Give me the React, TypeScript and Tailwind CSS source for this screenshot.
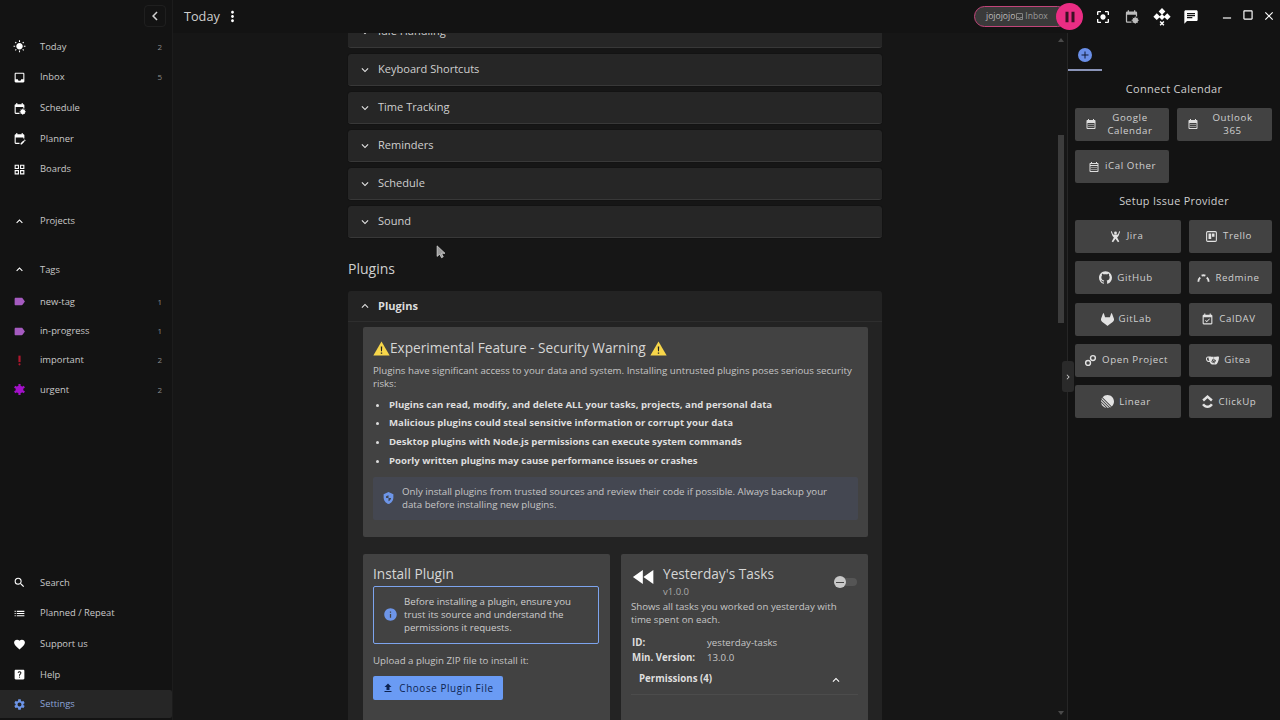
import React from 'react';
import {
  MdWbSunny, MdInbox, MdEditCalendar, MdOutlineGridView, MdExpandLess, MdExpandMore, MdLabel, MdPriorityHigh,
  MdSearch, MdList, MdFavorite, MdHelpCenter, MdSettings, MdChevronLeft, MdChevronRight, MdMoreVert, MdPause,
  MdCenterFocusStrong, MdChat, MdClose, MdAdd, MdCalendarMonth, MdFileUpload, MdInfo, MdFastRewind, MdRemove,
  MdEventAvailable, MdOutlineCalendarMonth, MdOutlineInbox, MdCropSquare,
} from 'react-icons/md';
import { SiGithub, SiGitlab, SiGitea, SiLinear, SiClickup } from 'react-icons/si';

const ScheduleIcon = ({ className = '' }: { className?: string }) => (
  <svg viewBox="0 0 24 24" className={className} fill="currentColor">
    <path d="M19 4h-1V2h-2v2H8V2H6v2H5a2 2 0 0 0-2 2v14a2 2 0 0 0 2 2h7v-2H5V9h14v3h2V6a2 2 0 0 0-2-2z" />
    <circle cx="18" cy="18" r="4.5" />
    <path d="M18 12v12M12 18h12M14 14l8 8M22 14l-8 8" stroke="currentColor" strokeWidth="1.2" />
  </svg>
);

const SparkIcon = ({ className = '' }: { className?: string }) => (
  <svg viewBox="0 0 24 24" className={className} fill="currentColor">
    <path d="M12 0l4.500 4.500L12 9 7.500 4.500zM5 7l4.500 4.500L5 16 .5 11.500zM19 7l4.500 4.500L19 16l-4.500-4.500zM12 8l4 4-4 4-4-4z" />
    <path d="M9.500 18l5 5M14.500 18l-5 5" stroke="currentColor" strokeWidth="2" />
  </svg>
);

const JiraIcon = ({ className = '' }: { className?: string }) => (
  <svg viewBox="0 0 24 24" className={className} fill="currentColor">
    <circle cx="12" cy="5.5" r="2.6" />
    <path d="M5 2l2.5 6.5h9L19 2l1.5 1-3 8-2.5 3 4 7-2.5 1.5L12 16l-4.500 6.500L5 21l4-7-2.500-3-3-8z" />
  </svg>
);

const TrelloIcon = ({ className = '' }: { className?: string }) => (
  <svg viewBox="0 0 24 24" className={className} fill="currentColor">
    <path fillRule="evenodd" d="M5 2h14a3 3 0 0 1 3 3v14a3 3 0 0 1-3 3H5a3 3 0 0 1-3-3V5a3 3 0 0 1 3-3zm0 2a1 1 0 0 0-1 1v14a1 1 0 0 0 1 1h14a1 1 0 0 0 1-1V5a1 1 0 0 0-1-1z" />
    <path d="M6.500 6.500h5v10h-5zM13 6.500h4.500v6H13z" />
  </svg>
);

const RedmineIcon = ({ className = '' }: { className?: string }) => (
  <svg viewBox="0 0 24 24" className={className} fill="none" stroke="currentColor" strokeWidth="3.4">
    <path d="M2.500 20a10 10 0 0 1 3.500-8M8.500 8.500a9 9 0 0 1 7 0M18 12a10 10 0 0 1 3.500 8" />
  </svg>
);

const OpenProjectIcon = ({ className = '' }: { className?: string }) => (
  <svg viewBox="0 0 24 24" className={className} fill="none" stroke="currentColor" strokeWidth="2.600">
    <rect x="3" y="12" width="9" height="9" rx="4.500" />
    <rect x="12" y="3" width="9" height="9" rx="4.500" />
  </svg>
);

const WarningIcon = ({ className = '' }: { className?: string }) => (
  <svg viewBox="0 0 24 24" className={className}>
    <path d="M12 2L23.500 22H.5z" fill="#f7d64a" />
    <path d="M11 9h2l-.3 7h-1.400zM11 17.500h2v2h-2z" fill="#222" />
  </svg>
);

const ShieldIcon = ({ className = '' }: { className?: string }) => (
  <svg viewBox="0 0 24 24" className={className} fill="currentColor">
    <path d="M12 1L3 5v6c0 5.550 3.840 10.740 9 12 5.160-1.260 9-6.450 9-12V5z" />
    <path d="M12 7v5H7.500V8.700zM12 12h4.800c-.4 2.800-2.300 5-4.800 6z" fill="#3f4450" />
  </svg>
);

function SparkleStar({ className = '' }: { className?: string }) {
  return (
    <svg viewBox="0 0 24 24" className={className} fill="currentColor">
      <circle cx="12" cy="12" r="7" />
      <path d="M12 2v20M3 7l18 10M21 7L3 17" stroke="currentColor" strokeWidth="4" />
    </svg>
  );
}

const navTop = [
  { label: 'Today', Icon: MdWbSunny, count: '2' },
  { label: 'Inbox', Icon: MdInbox, count: '5' },
  { label: 'Schedule', Icon: ScheduleIcon },
  { label: 'Planner', Icon: MdEditCalendar },
  { label: 'Boards', Icon: MdOutlineGridView },
];

const tags = [
  { label: 'new-tag', Icon: MdLabel, count: '1', color: 'text-[#a55bc0]' },
  { label: 'in-progress', Icon: MdLabel, count: '1', color: 'text-[#a55bc0]' },
  { label: 'important', Icon: MdPriorityHigh, count: '2', color: 'text-[#b0172e]' },
  { label: 'urgent', Icon: SparkleStar, count: '2', color: 'text-[#a311c9]' },
];

const navBottom = [
  { label: 'Search', Icon: MdSearch },
  { label: 'Planned / Repeat', Icon: MdList },
  { label: 'Support us', Icon: MdFavorite },
  { label: 'Help', Icon: MdHelpCenter },
];

const sections = ['Keyboard Shortcuts', 'Time Tracking', 'Reminders', 'Schedule', 'Sound'];

const risks = [
  'Plugins can read, modify, and delete ALL your tasks, projects, and personal data',
  'Malicious plugins could steal sensitive information or corrupt your data',
  'Desktop plugins with Node.js permissions can execute system commands',
  'Poorly written plugins may cause performance issues or crashes',
];

const providers = [
  { label: 'Jira', Icon: JiraIcon },
  { label: 'Trello', Icon: TrelloIcon },
  { label: 'GitHub', Icon: SiGithub },
  { label: 'Redmine', Icon: RedmineIcon },
  { label: 'GitLab', Icon: SiGitlab },
  { label: 'CalDAV', Icon: MdEventAvailable },
  { label: 'Open Project', Icon: OpenProjectIcon },
  { label: 'Gitea', Icon: SiGitea },
  { label: 'Linear', Icon: SiLinear },
  { label: 'ClickUp', Icon: SiClickup },
];

const NavRow = ({ label, Icon, count, iconClass = 'text-white', rowClass = 'h-[30.67px]' }: any) => (
  <div className={`flex items-center ${rowClass}`}>
    <div className="w-[38px] mr-[2px] flex justify-center">
      <Icon className={`w-[13px] h-[13px] ${iconClass}`} />
    </div>
    <span className="text-[9.4px] text-[#c8c8c8] flex-1">{label}</span>
    {count && <span className="text-[8px] text-[#8a8a8a] pr-[10px]">{count}</span>}
  </div>
);

const Accordion = ({ label }: { label: string }) => (
  <div className="h-[32px] mb-[6px] flex items-center rounded-[3px] bg-[#262626] border-b border-[#383838] shadow-[0_0_1px_#000] pl-[10px]">
    <MdExpandMore className="w-[14px] h-[14px] text-[#e2e2e2]" />
    <span className="ml-[6px] text-[11.05px] text-[#cfcfcf]">{label}</span>
  </div>
);

export default function App() {
  return (
    <div className="relative flex w-[1280px] h-[720px] overflow-hidden bg-[#141414] text-[#d4d4d4] font-['Open_Sans',sans-serif]">
      {/* Left nav */}
      <aside className="w-[173px] shrink-0 h-full flex flex-col bg-[#131313] border-r border-[#1c1c1c]">
        <div className="h-[31.5px] flex items-start justify-end pr-[6px] pt-[5px]">
          <div className="w-[22px] h-[22px] flex items-center justify-center rounded border border-[#1f1f1f]">
            <MdChevronLeft className="w-[18px] h-[18px] text-[#d0d0d0]" />
          </div>
        </div>
        {navTop.map((n) => <NavRow key={n.label} {...n} />)}
        <div className="h-[21px]" />
        <NavRow label="Projects" Icon={MdExpandLess} />
        <div className="h-[18px]" />
        <NavRow label="Tags" Icon={MdExpandLess} />
        <div className="h-[2px]" />
        {tags.map((t) => <NavRow key={t.label} {...t} iconClass={t.color} rowClass="h-[29.33px]" />)}
        <div className="flex-1" />
        {navBottom.map((n) => <NavRow key={n.label} {...n} />)}
        <div className="flex items-center h-[28px] mb-[2px] bg-[#262626] rounded-r-[2px]">
          <div className="w-[38px] mr-[2px] flex justify-center">
            <MdSettings className="w-[13px] h-[13px] text-[#6d95e8]" />
          </div>
          <span className="text-[9.4px] text-[#8aa3d6]">Settings</span>
        </div>
      </aside>

      {/* Main */}
      <div className="flex-1 flex flex-col min-w-0">
        <header className="h-[33px] shrink-0 flex items-center pl-[11px] pr-[4px] bg-[#131313]">
          <span className="text-[12.7px] text-[#cfcfcf]">Today</span>
          <MdMoreVert className="w-[17px] h-[17px] ml-[4px] text-white" />
          <div className="flex-1" />
          <div className="relative w-[94px] h-[21px] mr-[27px] flex items-center pl-[11px] rounded-full border border-[#c2457a] bg-[#3a3a3a]">
            <span className="text-[8.6px] text-[#bdbdbd]">jojojojo</span>
            <MdOutlineInbox className="w-[9px] h-[9px] text-[#9a9a9a]" />
            <span className="ml-[1px] text-[8.5px] text-[#9a9a9a]">Inbox</span>
            <div className="absolute left-[81px] top-[-4px] w-[27px] h-[27px] rounded-full bg-[#ea2d84] flex items-center justify-center">
              <MdPause className="w-[18px] h-[18px] text-[#3c1024]" />
            </div>
          </div>
          <div className="flex items-center gap-[13px] mr-[21px]">
            <MdCenterFocusStrong className="w-[16px] h-[16px] text-white" />
            <ScheduleIcon className="w-[15px] h-[15px] text-[#bdbdbd]" />
            <SparkIcon className="w-[18px] h-[18px] ml-[1px] text-white" />
            <MdChat className="w-[16px] h-[16px] -ml-[1px] text-white" />
          </div>
          <div className="flex items-center gap-[7px] text-white">
            <MdRemove className="w-[14px] h-[14px] mt-[3px]" />
            <MdCropSquare className="w-[14px] h-[14px] -mt-[3px]" />
            <MdClose className="w-[14px] h-[14px] -mt-[2px]" />
          </div>
        </header>

        <div className="flex-1 flex min-h-0">
          {/* Settings column */}
          <div className="relative w-[894px] shrink-0 overflow-hidden bg-[#161616]">
            <div className="w-[534px] ml-[175px] -mt-[17px]">
              <div className="h-[32px] mb-[6px] flex items-center rounded-[3px] bg-[#262626] border-b border-[#383838] pl-[10px]">
                <MdExpandMore className="w-[14px] h-[14px] text-[#e2e2e2]" />
                <span className="ml-[6px] text-[11.05px] text-[#cfcfcf]">Idle Handling</span>
              </div>
              {sections.map((s) => <Accordion key={s} label={s} />)}
              <h2 className="mt-[21px] mb-[12px] text-[14px] leading-[20px] text-[#cfcfcf]">Plugins</h2>
              <div className="rounded-t-[3px] bg-[#232323] pl-[15px] pr-[14px] pb-[20px]">
                <div className="h-[31px] -ml-[15px] -mr-[14px] mb-[5px] flex items-center pl-[10px] border-b border-[#2e2e2e]">
                  <MdExpandLess className="w-[14px] h-[14px] text-[#e2e2e2]" />
                  <span className="ml-[6px] text-[11.05px] font-bold text-[#dcdcdc]">Plugins</span>
                </div>
                <div className="rounded-[2px] bg-[#424242] px-[10px] pt-[10px] h-[210px]">
                  <h3 className="flex items-center text-[13.65px] leading-[22px] text-[#d6d6d6]">
                    <WarningIcon className="w-[17px] h-[17px]" />
                    Experimental Feature - Security Warning
                    <WarningIcon className="w-[17px] h-[17px] ml-[4px]" />
                  </h3>
                  <p className="mt-[5px] text-[9.7px] leading-[13.33px] text-[#c6c6c6]">
                    Plugins have significant access to your data and system. Installing untrusted plugins poses serious security risks:
                  </p>
                  <ul className="mt-[5px] list-disc pl-[16px] marker:text-[#dddddd]">
                    {risks.map((r) => (
                      <li key={r} className="text-[9.65px] leading-[18.8px] font-bold text-[#dedede]">{r}</li>
                    ))}
                  </ul>
                  <div className="mt-[6px] h-[43px] flex items-center bg-[#444751] rounded-[2px] pl-[9px] pr-[20px]">
                    <ShieldIcon className="w-[13px] h-[14px] text-[#6d95e8] shrink-0" />
                    <p className="ml-[7px] text-[9.7px] leading-[13.33px] text-[#c6c6c6]">
                      Only install plugins from trusted sources and review their code if possible. Always backup your data before installing new plugins.
                    </p>
                  </div>
                </div>

                <div className="mt-[17px] grid grid-cols-[247px_247px] gap-x-[11px] h-[200px]">
                  <div className="rounded-t-[2px] bg-[#424242] px-[10px] pt-[10px]">
                    <h3 className="text-[13.65px] leading-[20px] text-[#d6d6d6]">Install Plugin</h3>
                    <div className="mt-[2px] h-[58px] w-[226px] flex items-center rounded-[2px] border border-[#7da4ee] pl-[9px] pr-[6px] pb-[1px]">
                      <MdInfo className="w-[15px] h-[15px] text-[#6d95e8] shrink-0" />
                      <p className="ml-[6px] text-[9.7px] leading-[13.33px] text-[#cfcfcf]">
                        Before installing a plugin, ensure you trust its source and understand the permissions it requests.
                      </p>
                    </div>
                    <p className="mt-[10px] text-[9.7px] leading-[14px] text-[#c6c6c6]">Upload a plugin ZIP file to install it:</p>
                    <div className="mt-[8px] w-[130px] h-[24px] flex items-center justify-center rounded-[2px] bg-[#6a9bf4] text-[#0d2350]">
                      <MdFileUpload className="w-[12px] h-[12px] mr-[5px]" />
                      <span className="text-[9.9px] font-medium tracking-[0.06em]">Choose Plugin File</span>
                    </div>
                  </div>

                  <div className="rounded-t-[2px] bg-[#424242] px-[10px] pt-[10px]">
                    <div className="flex items-start">
                      <MdFastRewind className="w-[28px] h-[28px] -ml-[1px] -mt-[1px] text-white" />
                      <div className="ml-[5px] flex-1">
                        <h3 className="text-[13.65px] leading-[20px] text-[#d6d6d6]">Yesterday's Tasks</h3>
                        <p className="text-[9.5px] leading-[16px] text-[#a8a8a8]">v1.0.0</p>
                      </div>
                      <div className="relative w-[18px] h-[8px] mt-[14px] mr-[1px] rounded-full bg-[#555555]">
                        <div className="absolute -left-[5px] -top-[2px] w-[12px] h-[12px] rounded-full bg-[#c8c8c8] flex items-center justify-center">
                          <div className="w-[8px] h-[1px] bg-[#444444]" />
                        </div>
                      </div>
                    </div>
                    <p className="text-[9.7px] leading-[13.33px] text-[#c6c6c6]">
                      Shows all tasks you worked on yesterday with time spent on each.
                    </p>
                    <div className="mt-[8px] ml-[1px] grid grid-cols-[75px_1fr] text-[9.7px] leading-[15px]">
                      <span className="font-bold text-[#dedede]">ID:</span>
                      <span className="text-[#c6c6c6]">yesterday-tasks</span>
                      <span className="font-bold text-[#dedede]">Min. Version:</span>
                      <span className="text-[#c6c6c6]">13.0.0</span>
                    </div>
                    <div className="mt-[1px] h-[29px] flex items-center justify-between pl-[8px] pr-[15px] border-b border-[#4c4c4c]">
                      <span className="text-[9.7px] font-bold text-[#dedede]">Permissions (4)</span>
                      <MdExpandLess className="w-[14px] h-[14px] text-white" />
                    </div>
                  </div>
                </div>
              </div>
            </div>

            {/* page scrollbar */}
            <div className="absolute right-[3px] top-[102px] w-[6px] h-[188px] bg-[#3c3c3c]" />
            <div className="absolute right-[3px] top-[5px] w-0 h-0 border-x-[3px] border-x-transparent border-b-[4px] border-b-[#4a4a4a]" />
            <div className="absolute right-[3px] bottom-[5px] w-0 h-0 border-x-[3px] border-x-transparent border-t-[4px] border-t-[#4a4a4a]" />
          </div>

          {/* Right panel */}
          <aside className="relative flex-1 bg-[#131313] border-l border-[#262626] px-[7px]">
            <div className="w-[34px] h-[38px] -ml-[7px] pt-[15px] flex justify-center border-b-2 border-[#8a94b8]">
              <div className="w-[14px] h-[14px] rounded-full bg-[#6a8fe8] flex items-center justify-center">
                <MdAdd className="w-[12px] h-[12px] text-[#101a36]" />
              </div>
            </div>
            <h4 className="mt-[8px] text-center text-[11px] leading-[20px] tracking-[0.03em] text-[#cfcfcf]">Connect Calendar</h4>
            <div className="mt-[9px] grid grid-cols-[94px_95px] gap-x-[8px] gap-y-[9px]">
              <div className="h-[33px] flex items-center rounded-[2px] bg-[#424242] pl-[10px] pr-[6px] pb-[1px]">
                <MdCalendarMonth className="w-[12px] h-[12px] text-[#dedede] shrink-0" />
                <span className="flex-1 text-center text-[9.7px] leading-[13px] tracking-[0.06em] text-[#d0d0d0]">Google<br />Calendar</span>
              </div>
              <div className="h-[33px] flex items-center rounded-[2px] bg-[#424242] pl-[10px] pr-[6px] pb-[1px]">
                <MdCalendarMonth className="w-[12px] h-[12px] text-[#dedede] shrink-0" />
                <span className="flex-1 text-center text-[9.7px] leading-[13px] tracking-[0.06em] text-[#d0d0d0]">Outlook<br />365</span>
              </div>
              <div className="h-[33px] flex items-center justify-center gap-[5px] rounded-[2px] bg-[#424242]">
                <MdOutlineCalendarMonth className="w-[12px] h-[12px] text-[#dedede] shrink-0" />
                <span className="text-[9.7px] tracking-[0.06em] text-[#d0d0d0]">iCal Other</span>
              </div>
            </div>
            <h4 className="mt-[8px] text-center text-[10.8px] leading-[20px] tracking-[0.03em] text-[#cfcfcf]">Setup Issue Provider</h4>
            <div className="mt-[9px] grid grid-cols-[106px_83px] gap-x-[8px] gap-y-[8.33px]">
              {providers.map(({ label, Icon }) => (
                <div key={label} className="h-[33px] flex items-center justify-center gap-[5px] rounded-[2px] bg-[#424242] pr-[4px]">
                  <Icon className="w-[13px] h-[13px] text-[#e2e2e2]" />
                  <span className="text-[9.7px] tracking-[0.06em] text-[#d0d0d0]">{label}</span>
                </div>
              ))}
            </div>
          </aside>
        </div>
      </div>

      {/* Overlays */}
      <div className="absolute left-[1062px] top-[361px] w-[12px] h-[31px] rounded-[3px] bg-[#2a2a2a] flex items-center justify-center">
        <MdChevronRight className="w-[10px] h-[10px] text-[#cccccc]" />
      </div>
      <svg viewBox="0 0 12 16" className="absolute left-[436px] top-[245px] w-[11px] h-[14px]">
        <path d="M1 1v12l3-2.500 2 4 2-1-2-4h4z" fill="#9a9a9a" stroke="#e5e5e5" strokeWidth="0.8" />
      </svg>
    </div>
  );
}
